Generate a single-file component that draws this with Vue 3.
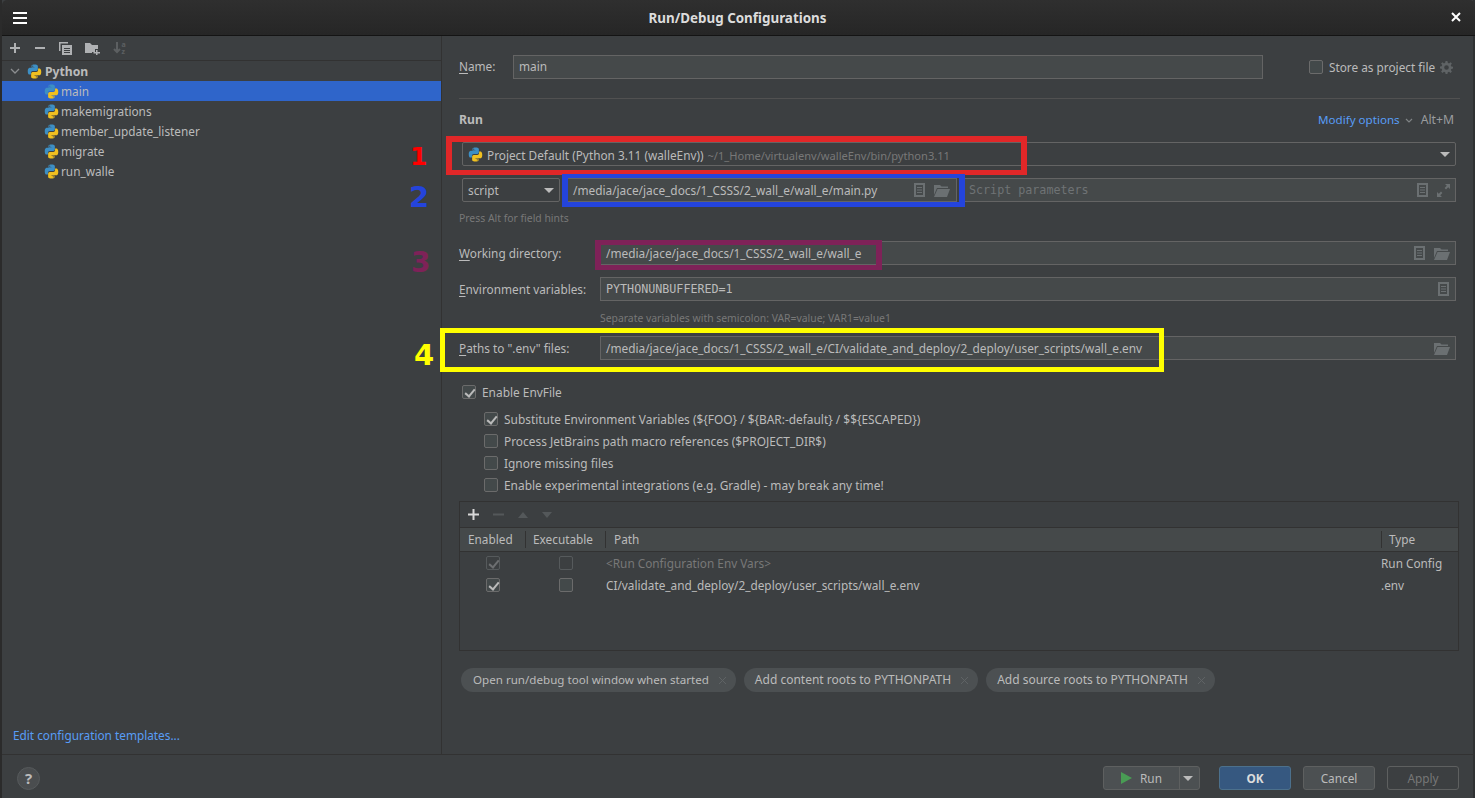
<script setup>
const configs = ['main', 'makemigrations', 'member_update_listener', 'migrate', 'run_walle']
const options = [
  { label: 'Substitute Environment Variables (${FOO} / ${BAR:-default} / $${ESCAPED})', on: true },
  { label: 'Process JetBrains path macro references ($PROJECT_DIR$)', on: false },
  { label: 'Ignore missing files', on: false },
  { label: 'Enable experimental integrations (e.g. Gradle) - may break any time!', on: false }
]
const chips = ['Open run/debug tool window when started', 'Add content roots to PYTHONPATH', 'Add source roots to PYTHONPATH']
</script>

<template>
  <div class="window">
    <svg class="defs" width="0" height="0" aria-hidden="true">
      <symbol id="py" viewBox="0 0 16 16">
        <path fill="#3d8fc4" d="M7.9.6C4.6.6 4.8 2 4.8 2v1.6h3.2V4H3.2S.8 3.8.8 7.6s2.1 3.6 2.1 3.6h1.3V9.500s-.1-2.100 2.100-2.100h3.300s2 0 2-1.900V2.500S11.900.6 7.900.6zM6.100 1.700a.6.6 0 1 1 0 1.200.6.6 0 0 1 0-1.200z"/>
        <path fill="#f0c020" d="M8.100 15.400c3.300 0 3.100-1.400 3.100-1.400v-1.600H8V12h4.800s2.400.2 2.400-3.600-2.100-3.600-2.100-3.600h-1.300v1.700s.1 2.100-2.100 2.100H6.400s-2 0-2 1.900v3s-.3 1.900 3.700 1.900zm1.800-1.100a.6.6 0 1 1 0-1.200.6.6 0 0 1 0 1.200z"/>
      </symbol>
      <symbol id="doc" viewBox="0 0 12 14">
        <path fill="#6b7072" fill-rule="evenodd" d="M0 0h11v14H0zM2 2v10h7V2zM3 4h5v1H3zM3 6.500h5v1H3zM3 9h5v1H3z"/>
      </symbol>
      <symbol id="folder" viewBox="0 0 16 13">
        <path fill="#6b7072" d="M0 1h6l1.500 1.500H14V4H3L0 11zM3.500 5H16l-3 8H0z"/>
      </symbol>
    </svg>

    <header class="titlebar">
      <div class="burger"><i></i><i></i><i></i></div>
      <div class="title">Run/Debug Configurations</div>
      <svg class="close" width="10" height="10" viewBox="0 0 10 10"><path d="M1 1l8 8M9 1l-8 8" stroke="#fff" stroke-width="2"/></svg>
    </header>

    <div class="body">
      <aside class="side">
        <div class="side-tools">
          <svg width="12" height="12" viewBox="0 0 12 12"><path d="M6 1v10M1 6h10" stroke="#afb1b3" stroke-width="2"/></svg>
          <svg width="12" height="12" viewBox="0 0 12 12"><path d="M1 6h10" stroke="#afb1b3" stroke-width="2"/></svg>
          <svg width="13" height="13" viewBox="0 0 13 13"><path fill="#afb1b3" fill-rule="evenodd" d="M0 0h9v1.500H1.500V9H0zM3 3h10v10H3zM5 6h6v1H5zM5 8h6v1H5zM5 10h6v1H5z"/></svg>
          <svg width="15" height="13" viewBox="0 0 15 13"><path fill="#afb1b3" d="M0 1h5l2 2h6v4h-3v3H7v1H0zM11 8h1.500v2H15v1.500h-2.500V13H11v-1.500H8.500V10H11z"/></svg>
          <svg width="14" height="14" viewBox="0 0 14 14"><path d="M4 1v10M1 8l3 3 3-3" fill="none" stroke="#5c5f61" stroke-width="2"/><text x="8.500" y="6" class="az">a</text><text x="8.500" y="13" class="az">z</text></svg>
        </div>
        <div class="tree">
          <div class="tree-row group">
            <svg class="chev" width="10" height="6" viewBox="0 0 10 6"><path d="M1 1l4 4 4-4" fill="none" stroke="#8c8e90" stroke-width="1.300"/></svg>
            <svg class="py" width="15" height="15"><use href="#py"/></svg>
            <span>Python</span>
          </div>
          <div v-for="(c, i) in configs" :key="c" class="tree-row leaf" :class="{ sel: i === 0 }">
            <svg class="py" width="15" height="15"><use href="#py"/></svg>
            <span>{{ c }}</span>
          </div>
        </div>
        <a class="templates">Edit configuration templates...</a>
      </aside>

      <main class="form">
        <div class="name-row">
          <label class="lbl name-lbl"><u>N</u>ame:</label>
          <div class="field name-field">main</div>
          <span class="check store"></span>
          <span class="store-text">Store as project file</span>
          <svg class="gear" width="13" height="13" viewBox="0 0 14 14"><path fill="#5f6365" fill-rule="evenodd" d="M6 0h2l.4 2 1.300.6L11.400 1.400 12.800 2.800l-1.200 1.700.6 1.300 1.800.3v2l-1.800.4-.6 1.300 1.200 1.600-1.400 1.400-1.700-1.200-1.300.6L8 14H6l-.4-1.800-1.300-.6-1.700 1.200-1.400-1.400 1.200-1.700-.6-1.300L0 8V6l1.800-.3.6-1.300L1.200 2.800 2.600 1.400l1.700 1.200 1.300-.6zM7 4.500a2.500 2.500 0 1 0 0 5 2.500 2.500 0 0 0 0-5z"/></svg>
        </div>
        <div class="rule"></div>
        <div class="run-head">
          <b>Run</b>
          <span class="modify">Modify options</span>
          <svg width="8" height="5" viewBox="0 0 8 5"><path d="M1 1l3 3 3-3" fill="none" stroke="#7f8385" stroke-width="1.200"/></svg>
          <span class="shortcut">Alt+M</span>
        </div>
        <div class="field combo interp">
          <svg class="py" width="15" height="15"><use href="#py"/></svg>
          <span class="interp-name">Project Default (Python 3.11 (walleEnv))</span>
          <span class="dim">~/1_Home/virtualenv/walleEnv/bin/python3.11</span>
          <i class="tri"></i>
        </div>
        <div class="script-row">
          <div class="field combo script">script<i class="tri"></i></div>
          <div class="field file">
            <span>/media/jace/jace_docs/1_CSSS/2_wall_e/wall_e/main.py</span>
            <svg class="ic" width="12" height="14"><use href="#doc"/></svg>
            <svg class="ic" width="16" height="13"><use href="#folder"/></svg>
          </div>
          <div class="field params">
            <span class="mono dimmer">Script parameters</span>
            <svg class="ic" width="12" height="14"><use href="#doc"/></svg>
            <svg class="ic" width="13" height="13" viewBox="0 0 13 13"><path fill="#6b7072" d="M8 0h5v5l-1.800-1.800L9 5.400 7.600 4l2.200-2.200zM5 13H0V8l1.800 1.800L4 7.600 5.400 9l-2.200 2.200z"/></svg>
          </div>
        </div>
        <div class="hint alt">Press Alt for field hints</div>

        <div class="form-row wd">
          <label class="lbl"><u>W</u>orking directory:</label>
          <div class="field grow">
            <span>/media/jace/jace_docs/1_CSSS/2_wall_e/wall_e</span>
            <svg class="ic" width="12" height="14"><use href="#doc"/></svg>
            <svg class="ic" width="16" height="13"><use href="#folder"/></svg>
          </div>
        </div>
        <div class="form-row env">
          <label class="lbl"><u>E</u>nvironment variables:</label>
          <div class="field grow">
            <span class="mono">PYTHONUNBUFFERED=1</span>
            <svg class="ic" width="12" height="14"><use href="#doc"/></svg>
          </div>
        </div>
        <div class="hint sep">Separate variables with semicolon: VAR=value; VAR1=value1</div>
        <div class="form-row paths">
          <label class="lbl"><u>P</u>aths to ".env" files:</label>
          <div class="field grow">
            <span>/media/jace/jace_docs/1_CSSS/2_wall_e/CI/validate_and_deploy/2_deploy/user_scripts/wall_e.env</span>
            <svg class="ic" width="16" height="13"><use href="#folder"/></svg>
          </div>
        </div>

        <div class="check-row enable"><span class="check on"></span>Enable EnvFile</div>
        <div v-for="o in options" :key="o.label" class="check-row sub">
          <span class="check" :class="{ on: o.on }"></span>{{ o.label }}
        </div>

        <section class="table">
          <div class="table-tools">
            <svg width="11" height="11" viewBox="0 0 11 11"><path d="M5.500 0v11M0 5.500h11" stroke="#d8d8d8" stroke-width="2"/></svg>
            <svg width="11" height="11" viewBox="0 0 11 11"><path d="M0 5.500h11" stroke="#54585a" stroke-width="2"/></svg>
            <i class="up"></i>
            <i class="down"></i>
          </div>
          <div class="thead">
            <div class="c1">Enabled</div><div class="c2">Executable</div><div class="c3">Path</div><div class="c4">Type</div>
          </div>
          <div class="trow muted">
            <div class="c1"><span class="check on off"></span></div>
            <div class="c2"><span class="check off"></span></div>
            <div class="c3">&lt;Run Configuration Env Vars&gt;</div>
            <div class="c4 normal">Run Config</div>
          </div>
          <div class="trow">
            <div class="c1"><span class="check on"></span></div>
            <div class="c2"><span class="check"></span></div>
            <div class="c3">CI/validate_and_deploy/2_deploy/user_scripts/wall_e.env</div>
            <div class="c4">.env</div>
          </div>
        </section>

        <div class="chips">
          <div v-for="c in chips" :key="c" class="chip">
            {{ c }}
            <svg width="9" height="9" viewBox="0 0 9 9"><path d="M1 1l7 7M8 1L1 8" stroke="#5f6365" stroke-width="1"/></svg>
          </div>
        </div>
      </main>
    </div>

    <footer class="footer">
      <div class="help">?</div>
      <div class="buttons">
        <div class="btn run">
          <span class="run-main">
            <svg width="11" height="12" viewBox="0 0 11 12"><path d="M0 0l11 6-11 6z" fill="#499c54"/></svg>
            Run
          </span>
          <span class="run-drop"><i class="tri"></i></span>
        </div>
        <div class="btn ok">OK</div>
        <div class="btn">Cancel</div>
        <div class="btn disabled">Apply</div>
      </div>
    </footer>

    <div class="mark m1"></div>
    <div class="mark m2"></div>
    <div class="mark m3"></div>
    <div class="mark m4"></div>
    <span class="num n1">1</span>
    <span class="num n2">2</span>
    <span class="num n3">3</span>
    <span class="num n4">4</span>
  </div>
</template>

<style>
html, body { margin: 0; background: #3c3f41; overflow: hidden; }
</style>

<style scoped>
.window {
  position: relative;
  width: 1475px;
  height: 798px;
  display: flex;
  flex-direction: column;
  background: #3c3f41;
  color: #bbbbbb;
  font: 11.800px/18px "Noto Sans", "Open Sans", sans-serif;
  overflow: hidden;
  box-sizing: border-box;
  border-left: 2px solid #2b2b2b;
  box-shadow: inset -2px 0 #2f3132;
}
.defs { position: absolute; }
svg { flex: none; display: block; }
u { text-decoration-thickness: 1px; text-underline-offset: 2px; }

.titlebar {
  height: 36px;
  flex: none;
  box-sizing: border-box;
  border-bottom: 1px solid #141414;
  background: linear-gradient(#2f2f2f, #262626);
  display: flex;
  align-items: center;
  position: relative;
  border-radius: 5px 5px 0 0;
}
.burger { margin-left: 11px; width: 14px; display: flex; flex-direction: column; gap: 3px; }
.burger i { display: block; height: 2px; background: #fff; }
.title { position: absolute; left: 0; right: 2px; text-align: center; color: #dcdcdc; font-weight: 700; font-size: 13.400px; }
.close { position: absolute; left: 1449px; top: 12px; }

.body { flex: 1; display: flex; min-height: 0; }
.side {
  width: 439px;
  flex: none;
  border-right: 1px solid #323232;
  display: flex;
  flex-direction: column;
}
.side-tools {
  height: 24px;
  border-bottom: 1px solid #323232;
  display: flex;
  align-items: center;
  gap: 13px;
  padding-left: 7px;
}
.az { font: 700 7px "Noto Sans", sans-serif; fill: #5c5f61; }
.tree { flex: 1; }
.tree-row { height: 20px; display: flex; align-items: center; }
.tree-row.group { font-weight: 700; padding-left: 8px; font-size: 12.200px; }
.group span { padding-top: 2px; }
.chev { margin-right: 7px; }
.group .py { margin-right: 3px; }
.leaf { padding-left: 42px; }
.leaf .py { margin-right: 2px; }
.sel { background: #2f65ca; }
.templates { color: #589df6; margin: 0 0 10px 11px; }

.form { flex: 1; min-width: 0; padding: 19px 0 0 17px; box-sizing: border-box; }
.field {
  background: #45494a;
  border: 1px solid #646464;
  box-sizing: border-box;
  height: 24px;
  display: flex;
  align-items: center;
  padding: 0 5px;
  gap: 8px;
  line-height: 17px;
  font-size: 11.850px;
}
.field > span:first-child { flex: 1; white-space: nowrap; }
.name-row { display: flex; align-items: center; height: 24px; }
.name-lbl { width: 54px; padding-bottom: 2px; }
.name-field { width: 750px; padding-bottom: 2px; }
.check {
  width: 14px;
  height: 14px;
  box-sizing: border-box;
  border: 1px solid #6b6b6b;
  border-radius: 2px;
  background: #43494a;
  display: inline-block;
  flex: none;
  position: relative;
}
.check.on::after {
  content: "";
  position: absolute;
  left: 4px;
  top: 1px;
  width: 4px;
  height: 8px;
  border: solid #bbbbbb;
  border-width: 0 2px 2px 0;
  transform: rotate(40deg);
}
.check.off { border-color: #565a5c; background: none; }
.check.off::after { border-color: #6d6f71; }
.store { margin-left: 46px; }
.store-text { margin-left: 6px; }
.gear { margin-left: 5px; }

.rule { height: 1px; background: #515151; margin: 19px 15px 0 0; }
.run-head { display: flex; align-items: center; height: 18px; margin-top: 12px; padding-right: 21px; }
.run-head b { flex: 1; font-weight: 700; font-size: 12.200px; }
.modify { color: #589df6; margin-right: 5px; font-size: 11.600px; }
.shortcut { margin-left: 8px; color: #9a9c9e; font-size: 12.200px; }

.combo { position: relative; }
.tri {
  position: absolute;
  right: 5px;
  top: 9px;
  width: 0;
  height: 0;
  border: 5px solid transparent;
  border-top: 5px solid #bbbbbb;
  border-bottom: 0;
}
.interp {
  height: 24px;
  margin: 13px 19px 0 3px;
  gap: 4px;
  border-radius: 2px;
  background: #3c3f41;
}
.interp-name { flex: none; padding-top: 2px; font-size: 11.800px; }
.dim { font-size: 11.100px; color: #787878; padding-top: 2px; }
.script-row { display: flex; margin: 12px 19px 0 3px; height: 24px; }
.script { width: 98px; border-radius: 2px; background: #3c3f41; }
.file { width: 392px; margin-left: 5px; padding: 0 6px 0 7px; }
.params { flex: 1; margin-left: 6px; }
.mono { font: 11.700px/17px "DejaVu Sans Mono", monospace; }
.dimmer { color: #6f7375; }
.hint { font-size: 10.400px; line-height: 14px; color: #787878; }
.alt { margin: 9px 0 0 0; }

.form-row { display: flex; align-items: center; height: 24px; padding-right: 19px; }
.form-row .lbl { width: 141px; flex: none; }
.grow { flex: 1; min-width: 0; }
.wd { margin-top: 16px; }
.env { margin-top: 12px; }
.sep { margin: 10px 0 0 141px; }
.paths { margin-top: 11px; }

.check-row { display: flex; align-items: center; height: 22px; gap: 6px; font-size: 11.900px; }
.enable { margin: 21px 0 0 3px; }
.sub { margin-left: 25px; }
.enable + .sub { margin-top: 5px; }

.table {
  width: 1000px;
  height: 150px;
  margin-top: 5px;
  box-sizing: border-box;
  border: 1px solid #323232;
}
.table-tools { height: 25px; display: flex; align-items: center; gap: 14px; padding-left: 8px; }
.up, .down { width: 0; height: 0; border: 5.500px solid transparent; }
.up { border-bottom: 6px solid #54585a; border-top: 0; }
.down { border-top: 6px solid #54585a; border-bottom: 0; }
.thead {
  height: 25px;
  background: #45494a;
  display: flex;
  align-items: center;
  border-top: 1px solid #323232;
  border-bottom: 1px solid #323232;
  box-sizing: border-box;
}
.thead > div { height: 17px; line-height: 17px; box-sizing: border-box; padding-left: 8px; border-right: 1px solid #323232; }
.c1 { width: 66px; flex: none; }
.c2 { width: 80px; flex: none; }
.c3 { flex: 1; }
.c4 { width: 77px; flex: none; }
.thead .c2 { padding-left: 7px; }
.thead .c4 { border-right: 0; width: 76px; padding-left: 7px; }
.trow { height: 22px; display: flex; align-items: center; }
.trow .c1, .trow .c2 { display: flex; justify-content: center; }
.muted { color: #787878; }
.normal { color: #bbbbbb; }

.chips { display: flex; margin: 17px 0 0 2px; gap: 8px; }
.chip {
  height: 24px;
  border-radius: 12px;
  background: #4c5052;
  padding: 0 9px 0 11px;
  display: flex;
  align-items: center;
  gap: 9px;
  white-space: nowrap;
  font-size: 12px;
}
.chip:first-child { font-size: 11.600px; padding-left: 12px; }

.footer {
  height: 44px;
  flex: none;
  box-sizing: border-box;
  border-top: 1px solid #323232;
  display: flex;
  align-items: center;
  padding: 3px 16px 0 15px;
  justify-content: space-between;
}
.help {
  width: 23px;
  height: 23px;
  box-sizing: border-box;
  border-radius: 50%;
  border: 1px solid #565a5c;
  background: #4a4d4f;
  text-align: center;
  font-weight: 700;
  font-size: 15px;
  line-height: 21px;
}
.buttons { display: flex; gap: 12px; }
.btn {
  width: 72px;
  height: 24px;
  box-sizing: border-box;
  border: 1px solid #5e6060;
  border-radius: 3px;
  background: #4c5052;
  text-align: center;
  line-height: 22px;
}
.btn.ok { background: #365880; border-color: #4c708c; font-weight: 700; color: #dcdcdc; }
.btn.disabled { background: none; color: #777; }
.btn.run { width: 97px; display: flex; margin-right: 7px; position: relative; }
.run-main { width: 75px; display: flex; align-items: center; justify-content: center; gap: 8px; border-right: 1px solid #5e6060; }
.run-drop { flex: 1; position: relative; }
.run-drop .tri { top: 9px; right: 6px; }

.mark { position: absolute; box-sizing: border-box; }
.m1 { left: 444px; top: 136px; width: 581px; height: 39px; border: solid #e12728; border-width: 6px 6px 5px; }
.m2 { left: 560px; top: 174px; width: 403px; height: 33px; border: solid #2444dc; border-width: 4px 6px 5px; }
.m3 { left: 593px; top: 240px; width: 287px; height: 30px; border: solid #7e2258; border-width: 5px 6px; }
.m4 { left: 438px; top: 328px; width: 724px; height: 44px; border: 5px solid #ffff00; }
.num { position: absolute; font-weight: 700; font-family: "DejaVu Sans", sans-serif; line-height: 30px; }
.n1 { left: 408px; top: 142px; font-size: 25px; color: #ff0000; }
.n2 { left: 407px; top: 182px; font-size: 29px; color: #2444dc; }
.n3 { left: 409px; top: 248px; font-size: 28px; color: #7e2258; }
.n4 { left: 412px; top: 340px; font-size: 29px; color: #ffff00; }
</style>
